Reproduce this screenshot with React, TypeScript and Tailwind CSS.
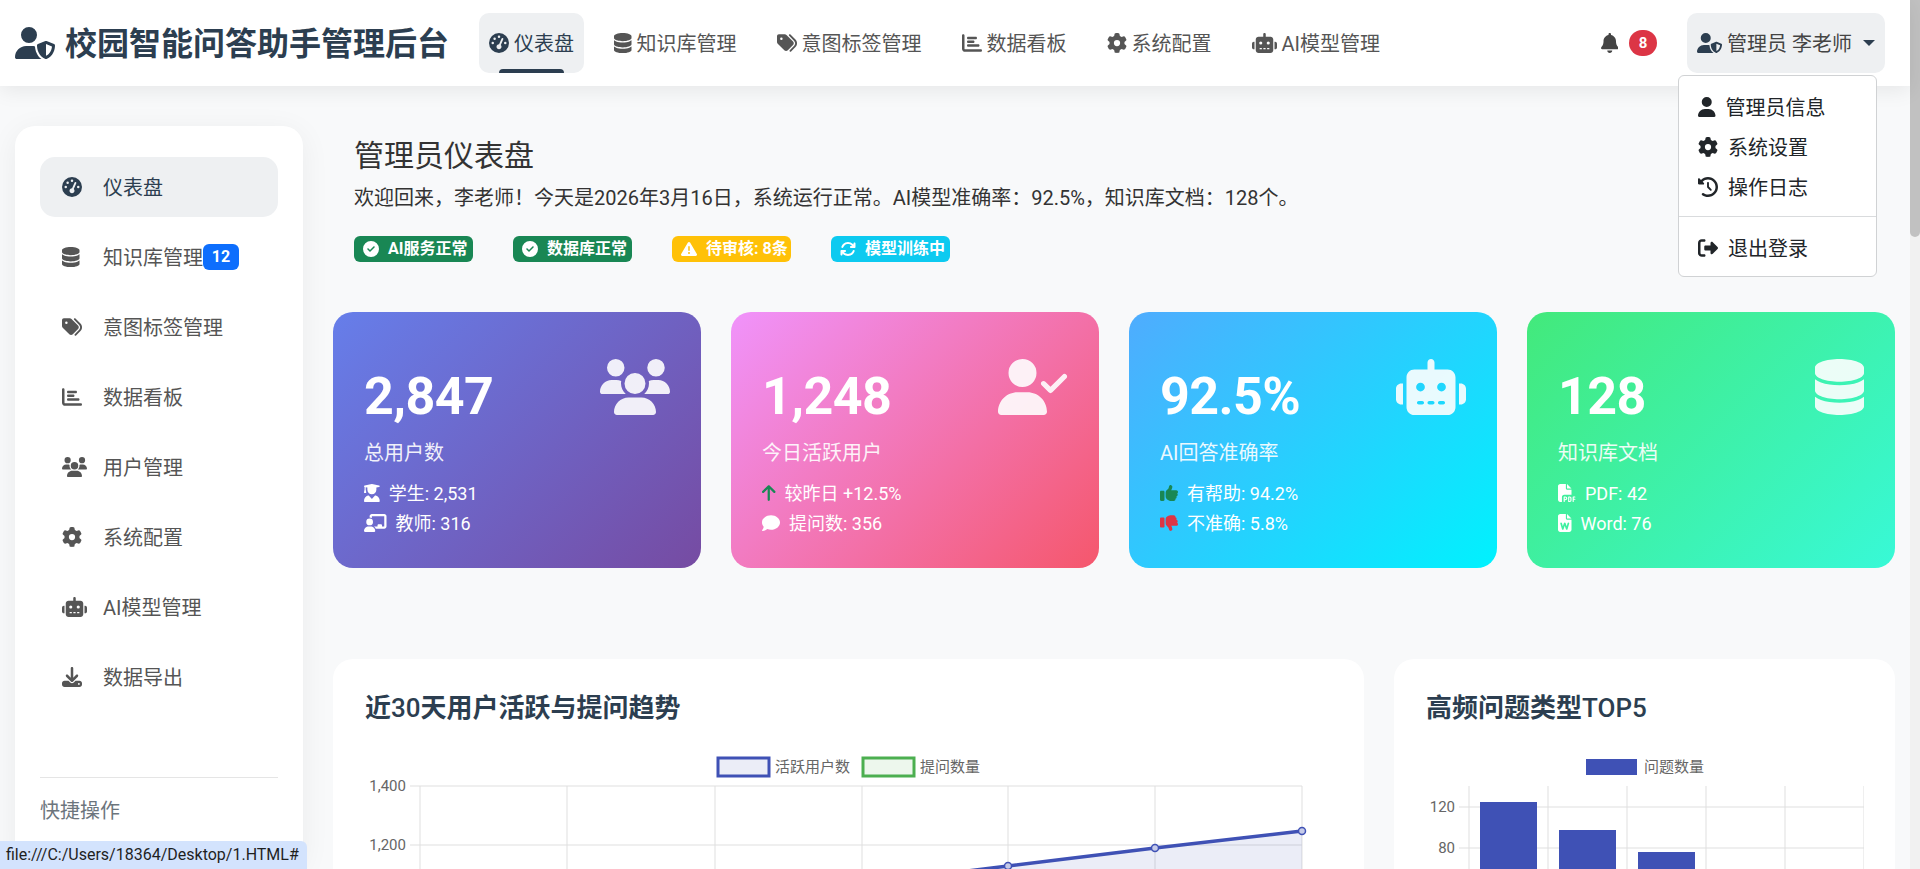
import type { ReactNode } from "react";
import {
  FaArrowUp,
  FaArrowsRotate,
  FaBell,
  FaChalkboardUser,
  FaChartBar,
  FaCircleCheck,
  FaClockRotateLeft,
  FaComment,
  FaDatabase,
  FaDownload,
  FaFilePdf,
  FaFileWord,
  FaGaugeHigh,
  FaGear,
  FaRightFromBracket,
  FaRobot,
  FaTags,
  FaThumbsDown,
  FaThumbsUp,
  FaTriangleExclamation,
  FaUser,
  FaUserCheck,
  FaUserGraduate,
  FaUserShield,
  FaUsers,
} from "react-icons/fa6";

const dbIcon = <FaDatabase className="w-[0.875em]" />;
const robotIcon = <FaRobot className="w-[1.25em]" />;
const usersIcon = <FaUsers className="w-[1.25em]" />;

const topNav = [
  { icon: <FaGaugeHigh />, label: "仪表盘", active: true },
  { icon: dbIcon, label: "知识库管理" },
  { icon: <FaTags />, label: "意图标签管理" },
  { icon: <FaChartBar />, label: "数据看板" },
  { icon: <FaGear />, label: "系统配置" },
  { icon: robotIcon, label: "AI模型管理" },
];

const sideNav = [
  { icon: <FaGaugeHigh />, label: "仪表盘", active: true },
  { icon: dbIcon, label: "知识库管理", badge: "12" },
  { icon: <FaTags />, label: "意图标签管理" },
  { icon: <FaChartBar />, label: "数据看板" },
  { icon: usersIcon, label: "用户管理" },
  { icon: <FaGear />, label: "系统配置" },
  { icon: robotIcon, label: "AI模型管理" },
  { icon: <FaDownload />, label: "数据导出" },
];

const statusBadges = [
  { icon: <FaCircleCheck />, label: "AI服务正常", color: "bg-[#198754]" },
  { icon: <FaCircleCheck />, label: "数据库正常", color: "bg-[#198754]" },
  { icon: <FaTriangleExclamation />, label: "待审核: 8条", color: "bg-[#ffc107]" },
  { icon: <FaArrowsRotate />, label: "模型训练中", color: "bg-[#0dcaf0]" },
];

const stats = [
  {
    value: "2,847",
    label: "总用户数",
    icon: usersIcon,
    gradient: "bg-[linear-gradient(135deg,#667eea_0%,#764ba2_100%)]",
    rows: [
      { icon: <FaUserGraduate className="w-[0.875em]" />, text: "学生: 2,531" },
      { icon: <FaChalkboardUser className="w-[1.25em]" />, text: "教师: 316" },
    ],
  },
  {
    value: "1,248",
    label: "今日活跃用户",
    icon: <FaUserCheck className="w-[1.25em]" />,
    gradient: "bg-[linear-gradient(135deg,#f093fb_0%,#f5576c_100%)]",
    rows: [
      { icon: <FaArrowUp className="w-[0.75em] text-[#198754]" />, text: "较昨日 +12.5%" },
      { icon: <FaComment />, text: "提问数: 356" },
    ],
  },
  {
    value: "92.5%",
    label: "AI回答准确率",
    icon: robotIcon,
    gradient: "bg-[linear-gradient(135deg,#4facfe_0%,#00f2fe_100%)]",
    rows: [
      { icon: <FaThumbsUp className="text-[#198754]" />, text: "有帮助: 94.2%" },
      { icon: <FaThumbsDown className="text-[#dc3545]" />, text: "不准确: 5.8%" },
    ],
  },
  {
    value: "128",
    label: "知识库文档",
    icon: dbIcon,
    gradient: "bg-[linear-gradient(135deg,#43e97b_0%,#38f9d7_100%)]",
    rows: [
      { icon: <FaFilePdf />, text: "PDF: 42" },
      { icon: <FaFileWord className="w-[0.75em]" />, text: "Word: 76" },
    ],
  },
];

function DropdownItem({ icon, children }: { icon: ReactNode; children: ReactNode }) {
  return (
    <div className="flex h-10 items-center gap-[10px] pl-[19px] text-[#212529]">
      {icon}
      <span className="pt-[1px]">{children}</span>
    </div>
  );
}

function LineChart() {
  const xs = [420, 567, 715, 862, 1008, 1155, 1302];
  const points = "862,884 1008,866 1155,848 1302,831";
  return (
    <svg width={969} height={260} viewBox="365 750 969 260" className="block">
      <g stroke="#dfdfdf" strokeWidth="1">
        {xs.map((x) => (
          <line key={x} x1={x} y1={786} x2={x} y2={1010} />
        ))}
        <line x1={410} y1={786} x2={1302} y2={786} />
        <line x1={410} y1={845} x2={1302} y2={845} />
      </g>
      <rect x={718} y={758} width={51} height={18} fill="#3f51b5" fillOpacity="0.1" stroke="#3f51b5" strokeWidth="3" />
      <text x={775} y={772} fontSize="15" fill="#666">活跃用户数</text>
      <rect x={863} y={758} width={51} height={18} fill="#4caf50" fillOpacity="0.1" stroke="#4caf50" strokeWidth="3" />
      <text x={920} y={772} fontSize="15" fill="#666">提问数量</text>
      <text x={406} y={791} fontSize="15" fill="#666" textAnchor="end">1,400</text>
      <text x={406} y={850} fontSize="15" fill="#666" textAnchor="end">1,200</text>
      <polygon points={`${points} 1302,1010 862,1010`} fill="#3f51b5" fillOpacity="0.1" />
      <polyline points={points} fill="none" stroke="#3f51b5" strokeWidth="3.5" />
      {[[1008, 866], [1155, 848], [1302, 831]].map(([x, y]) => (
        <circle key={x} cx={x} cy={y} r="3.5" fill="#c5cae9" stroke="#3f51b5" strokeWidth="1.5" />
      ))}
    </svg>
  );
}

function BarChart() {
  const xs = [1469, 1548, 1627, 1706, 1785, 1864];
  const bars = [
    { x: 1480, top: 802 },
    { x: 1559, top: 830 },
    { x: 1638, top: 852 },
  ];
  return (
    <svg width={469} height={260} viewBox="1395 750 469 260" className="block">
      <g stroke="#dfdfdf" strokeWidth="1">
        {xs.map((x) => (
          <line key={x} x1={x} y1={786} x2={x} y2={1010} />
        ))}
        <line x1={1459} y1={807} x2={1864} y2={807} />
        <line x1={1459} y1={848} x2={1864} y2={848} />
      </g>
      <rect x={1586} y={759} width={51} height={16} fill="#3f51b5" />
      <text x={1644} y={772} fontSize="15" fill="#666">问题数量</text>
      <text x={1455} y={812} fontSize="15" fill="#666" textAnchor="end">120</text>
      <text x={1455} y={853} fontSize="15" fill="#666" textAnchor="end">80</text>
      {bars.map((b) => (
        <rect key={b.x} x={b.x} y={b.top} width={57} height={1010 - b.top} fill="#3f51b5" />
      ))}
    </svg>
  );
}

export default function App() {
  return (
    <div className="relative flex h-screen overflow-hidden bg-[#f8f9fa] text-[20px] text-[#212529] [font-family:Roboto,'Noto_Sans_CJK_SC',sans-serif]">
      <div className="flex min-w-0 flex-1 flex-col">
        {/* Top nav */}
        <header className="relative z-10 flex h-[86px] shrink-0 items-center bg-white pl-[15px] pr-[25px] shadow-[0_4px_20px_rgba(0,0,0,0.08)]">
          <div className="flex items-center gap-[10px] text-[32px] font-bold text-[#2c3e50]">
            <FaUserShield className="w-[1.25em]" />
            <span className="pt-[2px]">校园智能问答助手管理后台</span>
          </div>
          <nav className="ml-[30px] flex gap-5">
            {topNav.map((item) => (
              <div
                key={item.label}
                className={`relative flex h-[60px] items-center gap-[5px] rounded-[10px] px-[10px] ${
                  item.active ? "bg-[#eef0f2] text-[#2c3e50]" : "text-[#555]"
                }`}
              >
                {item.icon}
                <span className="pt-[2px]">{item.label}</span>
                {item.active && (
                  <span className="absolute bottom-0 left-[20px] h-1 w-[65px] rounded-t bg-[#2c3e50]" />
                )}
              </div>
            ))}
          </nav>
          <div className="ml-auto flex items-center">
            <FaBell className="w-[0.875em] text-[#444]" />
            <span className="ml-[11px] flex h-[26px] w-[28px] items-center justify-center rounded-full bg-[#dc3545] text-[15px] font-bold text-white">
              8
            </span>
            <div className="relative ml-[30px] flex h-[60px] items-center gap-[5px] rounded-[10px] bg-[#eef0f2] px-[10px] text-[#444]">
              <FaUserShield className="w-[1.25em] text-[#2c3e50]" />
              <span className="pt-[1px]">管理员 李老师</span>
              <span className="ml-[6px] h-0 w-0 border-x-[6px] border-t-[6px] border-x-transparent border-t-[#2c3e50]" />
              <div className="absolute right-[8px] top-[62px] w-[199px] rounded-[6px] border border-[#d0d2d4] bg-white pb-2 pt-[11px]">
                <DropdownItem icon={<FaUser className="w-[0.875em]" />}>管理员信息</DropdownItem>
                <DropdownItem icon={<FaGear />}>系统设置</DropdownItem>
                <DropdownItem icon={<FaClockRotateLeft />}>操作日志</DropdownItem>
                <div className="mb-[11px] mt-[9px] h-px bg-[#d9dbdd]" />
                <DropdownItem icon={<FaRightFromBracket />}>退出登录</DropdownItem>
              </div>
            </div>
          </div>
        </header>

        <div className="flex min-h-0 flex-1 gap-[30px] pl-[15px] pr-[15px] pt-10">
          {/* Sidebar */}
          <aside className="w-[288px] shrink-0 rounded-[20px] bg-white px-[25px] pb-10 pt-[31px] shadow-[0_5px_30px_rgba(0,0,0,0.06)]">
            {sideNav.map((item) => (
              <div
                key={item.label}
                className={`mb-[10px] flex h-[60px] items-center rounded-[15px] pl-[22px] ${
                  item.active ? "bg-[#eef0f2] text-[#2c3e50]" : "text-[#555]"
                }`}
              >
                <span className="w-[41px] shrink-0">{item.icon}</span>
                <span className="pt-[2px]">{item.label}</span>
                {item.badge && (
                  <span className="flex h-[26px] w-9 items-center justify-center rounded-[6px] bg-[#0d6efd] text-[16px] font-bold text-white">
                    {item.badge}
                  </span>
                )}
              </div>
            ))}
            <div className="mt-[70px] h-px bg-[#e5e5e5]" />
            <div className="mt-[18px] leading-[30px] text-[#6c757d]">快捷操作</div>
          </aside>

          {/* Main */}
          <main className="min-w-0 flex-1">
            <div className="pl-[21px] pt-[10px]">
              <h1 className="text-[30px] leading-[40px] text-[#333]">管理员仪表盘</h1>
              <p className="mt-[7px] leading-[30px] text-[#333]">
                欢迎回来，李老师！今天是2026年3月16日，系统运行正常。AI模型准确率：92.5%，知识库文档：128个。
              </p>
              <div className="mt-[23px] flex gap-10">
                {statusBadges.map((b) => (
                  <span
                    key={b.label}
                    className={`flex h-[26px] w-[119px] items-center gap-[9px] rounded-[6px] pl-[9px] text-[16px] font-bold text-white ${b.color}`}
                  >
                    {b.icon}
                    {b.label}
                  </span>
                ))}
              </div>
            </div>

            <div className="mt-[50px] grid grid-cols-4 gap-[30px]">
              {stats.map((s) => (
                <div key={s.value} className={`h-[256px] rounded-[20px] px-[31px] pt-[47px] text-white ${s.gradient}`}>
                  <div className="flex h-[56px] justify-between">
                    <span className="mt-[6px] text-[52px] font-bold leading-[64px] tracking-[-0.6px]">{s.value}</span>
                    <span className="text-[56px] opacity-90">{s.icon}</span>
                  </div>
                  <div className="mt-[23px] leading-[30px] opacity-90">{s.label}</div>
                  <div className="mt-[10px] text-[18px]">
                    {s.rows.map((r) => (
                      <div key={r.text} className="flex h-[30px] items-center gap-[9px]">
                        {r.icon}
                        <span>{r.text}</span>
                      </div>
                    ))}
                  </div>
                </div>
              ))}
            </div>

            <div className="mt-[91px] grid grid-cols-[1031px_501px] gap-[30px]">
              <div className="h-[600px] rounded-[20px] bg-white pl-8 pt-[31px]">
                <h2 className="text-[26px] font-bold leading-9 text-[#2c3e50]">
                  近<span className="font-medium">30</span>天用户活跃与提问趋势
                </h2>
                <div className="mt-[24px]">
                  <LineChart />
                </div>
              </div>
              <div className="h-[600px] rounded-[20px] bg-white pl-[1px] pt-[31px]">
                <h2 className="pl-[31px] text-[26px] font-bold leading-9 text-[#2c3e50]">
                  高频问题类型<span className="font-medium">TOP5</span>
                </h2>
                <div className="mt-[24px]">
                  <BarChart />
                </div>
              </div>
            </div>
          </main>
        </div>
      </div>

      {/* Scrollbar */}
      <div className="w-[10px] shrink-0 bg-[#f1f1f1]">
        <div className="h-[237px] rounded-b-[5px] bg-[#c1c1c1]" />
      </div>

      {/* Browser link status */}
      <div className="absolute bottom-0 left-0 z-20 flex h-7 w-[307px] items-center rounded-tr-[6px] bg-[#d3e3fd] pl-[6px] text-[16px] text-[#1f1f1f]">
        file:///C:/Users/18364/Desktop/1.HTML#
      </div>
    </div>
  );
}
